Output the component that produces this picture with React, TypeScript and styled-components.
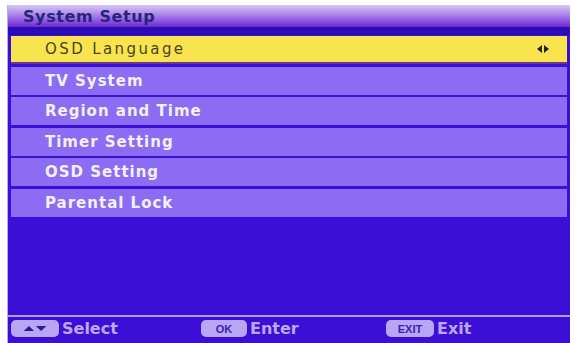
import React from 'react'
import styled, { createGlobalStyle } from 'styled-components'

const GlobalStyle = createGlobalStyle`
  html, body {
    margin: 0;
    padding: 0;
    background: #ffffff;
    overflow: hidden;
  }
`

const items = [
  'OSD Language',
  'TV System',
  'Region and Time',
  'Timer Setting',
  'OSD Setting',
  'Parental Lock',
]

const App = () => {
  return (
    <>
      <GlobalStyle />
      <Page>
        <Screen>
          <TitleBar>
            <Title>System Setup</Title>
          </TitleBar>
          <Menu>
            {items.map((item, i) => (
              <Row key={item} active={i === 0}>
                <RowLabel active={i === 0}>{item}</RowLabel>
                {i === 0 && (
                  <Arrows viewBox="0 0 12 8" width="12" height="8">
                    <path d="M0 4 L5 0 L5 8 Z" fill="#222" />
                    <path d="M12 4 L7 0 L7 8 Z" fill="#222" />
                  </Arrows>
                )}
              </Row>
            ))}
          </Menu>
          <Spacer />
          <Footer>
            <Hint width={190}>
              <Key width={48}>
                <svg viewBox="0 0 30 8" width="26" height="7">
                  <path d="M2 7 L8 1 L14 7 Z" fill="#2a1a8a" />
                  <path d="M16 1 L28 1 L22 7 Z" fill="#2a1a8a" />
                </svg>
              </Key>
              <HintText>Select</HintText>
            </Hint>
            <Hint width={185}>
              <Key width={46}>
                <KeyText>OK</KeyText>
              </Key>
              <HintText>Enter</HintText>
            </Hint>
            <Hint width={140}>
              <Key width={48}>
                <KeyText>EXIT</KeyText>
              </Key>
              <HintText>Exit</HintText>
            </Hint>
          </Footer>
        </Screen>
      </Page>
    </>
  )
}

const Page = styled.div`
  width: 576px;
  height: 343px;
  padding: 5px 6px 0 7px;
  box-sizing: border-box;
`

const Screen = styled.div`
  height: 100%;
  display: flex;
  flex-direction: column;
  background: #3b0fd6;
  border-left: 1px solid #b7a9e6;
`

const TitleBar = styled.div`
  height: 22px;
  display: flex;
  align-items: flex-end;
  padding-left: 15px;
  background: linear-gradient(
    to bottom,
    #d6c8f4 0%,
    #b493ec 35%,
    #8a4fe0 75%,
    #6a2cc8 100%
  );
  border-bottom: 8px solid #2d0ab8;
`

const Title = styled.div`
  font-family: 'DejaVu Sans', sans-serif;
  font-weight: bold;
  font-size: 16px;
  color: #26237e;
  letter-spacing: 0.6px;
  line-height: 20px;
`

const Menu = styled.div`
  display: flex;
  flex-direction: column;
  gap: 2.6px;
  padding: 1px 3px 0 3px;
`

const Row = styled.div<{ active?: boolean }>`
  height: 28px;
  box-sizing: border-box;
  display: flex;
  align-items: center;
  justify-content: space-between;
  padding: 0 18px 0 34px;
  background: ${(p) => (p.active ? '#f7e44f' : '#8c6cf3')};
  border-bottom: ${(p) => (p.active ? '2px solid #6a3a8a' : 'none')};
`

const RowLabel = styled.span<{ active?: boolean }>`
  font-family: 'DejaVu Sans', sans-serif;
  font-weight: ${(p) => (p.active ? 'normal' : 'bold')};
  font-size: 15px;
  letter-spacing: ${(p) => (p.active ? '2.4px' : '1px')};
  color: ${(p) => (p.active ? '#4d4220' : '#f4f0ff')};
`

const Arrows = styled.svg`
  display: block;
`

const Spacer = styled.div`
  flex: 1;
`

const Footer = styled.div`
  display: flex;
  align-items: center;
  height: 23px;
  padding-left: 3px;
  border-top: 2px solid #b49cf5;
  margin-bottom: 3px;
`

const Hint = styled.div<{ width: number }>`
  display: flex;
  align-items: center;
  gap: 3px;
  width: ${(p) => p.width}px;
`

const Key = styled.div<{ width: number }>`
  width: ${(p) => p.width}px;
  height: 17px;
  border-radius: 5px;
  background: #b8a6f2;
  display: flex;
  align-items: center;
  justify-content: center;
`

const KeyText = styled.span`
  font-family: 'Liberation Sans', Arial, sans-serif;
  font-weight: bold;
  font-size: 11px;
  color: #3a20b0;
`

const HintText = styled.span`
  font-family: 'DejaVu Sans', sans-serif;
  font-weight: bold;
  font-size: 16px;
  color: #bba8f6;
`

export default App
